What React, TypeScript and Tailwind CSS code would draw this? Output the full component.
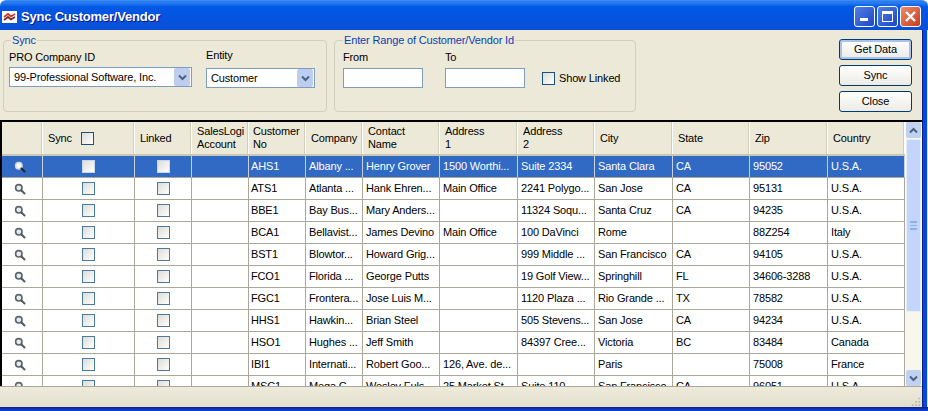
const columns = [
  { label: "Sync", width: "w-[92px]" },
  { label: "Linked", width: "w-[57px]" },
  { label: "SalesLogi Account", width: "w-[57px]" },
  { label: "Customer No", width: "w-[57px]" },
  { label: "Company", width: "w-[57px]" },
  { label: "Contact Name", width: "w-[77px]" },
  { label: "Address 1", width: "w-[78px]" },
  { label: "Address 2", width: "w-[77px]" },
  { label: "City", width: "w-[78px]" },
  { label: "State", width: "w-[77px]" },
  { label: "Zip", width: "w-[78px]" },
  { label: "Country", width: "w-[77px]" },
];

const rows = [
  ["AHS1", "Albany ...", "Henry Grover", "1500 Worthi...", "Suite 2334", "Santa Clara", "CA", "95052", "U.S.A."],
  ["ATS1", "Atlanta ...", "Hank Ehren...", "Main Office", "2241 Polygo...", "San Jose", "CA", "95131", "U.S.A."],
  ["BBE1", "Bay Bus...", "Mary Anders...", "", "11324 Soqu...", "Santa Cruz", "CA", "94235", "U.S.A."],
  ["BCA1", "Bellavist...", "James Devino", "Main Office", "100 DaVinci", "Rome", "", "88Z254", "Italy"],
  ["BST1", "Blowtor...", "Howard Grig...", "", "999 Middle ...", "San Francisco", "CA", "94105", "U.S.A."],
  ["FCO1", "Florida ...", "George Putts", "", "19 Golf View...", "Springhill", "FL", "34606-3288", "U.S.A."],
  ["FGC1", "Frontera...", "Jose Luis M...", "", "1120 Plaza ...", "Rio Grande ...", "TX", "78582", "U.S.A."],
  ["HHS1", "Hawkin...", "Brian Steel", "", "505 Stevens...", "San Jose", "CA", "94234", "U.S.A."],
  ["HSO1", "Hughes ...", "Jeff Smith", "", "84397 Cree...", "Victoria", "BC", "83484", "Canada"],
  ["IBI1", "Internati...", "Robert Goo...", "126, Ave. de...", "", "Paris", "", "75008", "France"],
  ["MSC1", "Mega C...", "Wesley Fuls...", "25 Market St", "Suite 110", "San Francisco", "CA", "96051", "U.S.A."],
];

const textWidths = columns.slice(3).map((c) => c.width);

const CheckBox = ({ selected, dark }: { selected?: boolean; dark?: boolean }) => (
  <span
    className={`block w-[13px] h-[13px] border bg-gradient-to-br from-[#dcdcd7] to-white ${
      selected ? "border-[#c9d6ea]" : dark ? "border-[#1c5180]" : "border-[#4a7a9c]"
    }`}
  />
);

const Magnifier = ({ selected }: { selected?: boolean }) => (
  <svg width="12" height="12" viewBox="0 0 12 12">
    <circle
      cx="4.8"
      cy="4.8"
      r="3.2"
      fill={selected ? "#ffffff" : "#e4ecf2"}
      stroke={selected ? "#d8d8d8" : "#5d6468"}
      strokeWidth="1.6"
    />
    <path d="M7.5 7.5 L10.5 10.5" stroke={selected ? "#20242c" : "#55585a"} strokeWidth="2" strokeLinecap="round" />
  </svg>
);

const Dropdown = ({ value, width }: { value: string; width: string }) => (
  <div className={`${width} h-[20px] flex items-center justify-between bg-white border border-[#7f9db9] pl-1 pr-px`}>
    <span>{value}</span>
    <span className="w-[16px] h-[18px] flex items-center justify-center rounded-[2px] bg-[#bccdef]">
      <svg width="9" height="7" viewBox="0 0 9 7">
        <path d="M1 1.5 L4.5 5 L8 1.5" fill="none" stroke="#4d6185" strokeWidth="2" />
      </svg>
    </span>
  </div>
);

const ActionButton = ({ label, isDefault }: { label: string; isDefault?: boolean }) => (
  <button
    className={`w-[73px] h-[21px] rounded-[3px] border border-[#003c74] bg-gradient-to-b from-white to-[#ecebe5] text-black ${
      isDefault ? "shadow-[inset_0_0_0_2px_#a9c3ea]" : ""
    }`}
  >
    {label}
  </button>
);

const App = () => {
  return (
    <div className="w-[928px] h-[411px] flex flex-col overflow-hidden bg-white text-[11px] leading-[13px] tracking-[-0.15px] text-black font-['Liberation_Sans',sans-serif]">
      <div className="h-[30px] shrink-0 flex items-center pt-[2px] pl-[2px] pr-[7px] rounded-t-[6px] bg-gradient-to-b from-[#2a7cf0] from-[6%] via-[#0058e6] via-[20%] to-[#0a4fd6] border-t border-[#3a8cf5]">
        <svg width="15" height="12" viewBox="0 0 15 12" className="shrink-0">
          <rect width="15" height="12" fill="#fff" />
          <path d="M2 6 L6 3 L9 5.5 L13 3" fill="none" stroke="#d23a30" strokeWidth="1.8" />
          <path d="M2 9 L6 6 L9 8.5 L13 6" fill="none" stroke="#7d2a30" strokeWidth="1.8" />
        </svg>
        <span className="ml-[4px] text-[13px] font-bold tracking-[-0.2px] text-white [text-shadow:1px_1px_#0f1089]">
          Sync Customer/Vendor
        </span>
        <div className="ml-auto flex gap-[2px]">
          <div className="w-[21px] h-[21px] rounded-[3px] border border-white bg-gradient-to-br from-[#4f7fe8] to-[#1f45c4] flex items-end pl-[5px] pb-[5px]">
            <span className="block w-[8px] h-[3px] bg-white" />
          </div>
          <div className="w-[21px] h-[21px] rounded-[3px] border border-white bg-gradient-to-br from-[#4f7fe8] to-[#1f45c4] flex items-center justify-center">
            <span className="block w-[11px] h-[11px] border border-white border-t-[3px]" />
          </div>
          <div className="w-[21px] h-[21px] rounded-[3px] border border-white bg-gradient-to-br from-[#ec8a6a] to-[#c8391a] flex items-center justify-center">
            <svg width="13" height="13" viewBox="0 0 13 13">
              <path d="M2 2 L11 11 M11 2 L2 11" stroke="#fff" strokeWidth="2.4" />
            </svg>
          </div>
        </div>
      </div>

      <div className="flex-1 min-h-0 flex flex-col pr-[6px] bg-[#ece9d8] shadow-[inset_-1px_0_#dfe6f7,inset_-5px_0_#0b45e0,inset_-6px_0_#0a1f8a]">
        <div className="h-[90px] shrink-0 flex pl-[3px] pr-[10px] pt-[4px]">
          <fieldset className="w-[324px] h-[78px] border border-[#d0d0bf] rounded-[4px] px-[5px] pt-[2px]">
            <legend className="ml-[2px] px-[1px] text-[#0b3fb0]">Sync</legend>
            <div className="flex gap-[14px]">
              <div className="flex flex-col gap-[3px]">
                <span className="pt-[2px]">PRO Company ID</span>
                <Dropdown value="99-Professional Software, Inc." width="w-[183px]" />
              </div>
              <div className="flex flex-col gap-[6px]">
                <span>Entity</span>
                <Dropdown value="Customer" width="w-[109px]" />
              </div>
            </div>
          </fieldset>
          <fieldset className="ml-[7px] w-[302px] h-[78px] border border-[#d0d0bf] rounded-[4px] pl-[8px] pt-[3px]">
            <legend className="px-[1px] text-[#0b3fb0]">Enter Range of Customer/Vendor Id</legend>
            <div className="flex items-end">
              <div className="flex flex-col gap-[4px]">
                <span className="pt-[1px]">From</span>
                <div className="w-[80px] h-[20px] bg-white border border-[#7f9db9]" />
              </div>
              <div className="ml-[22px] flex flex-col gap-[4px]">
                <span className="pt-[1px]">To</span>
                <div className="w-[80px] h-[20px] bg-white border border-[#7f9db9]" />
              </div>
              <div className="ml-[17px] mb-[3px] flex items-center gap-[4px]">
                <CheckBox dark />
                <span>Show Linked</span>
              </div>
            </div>
          </fieldset>
          <div className="ml-auto mt-[5px] flex flex-col gap-[5px]">
            <ActionButton label="Get Data" isDefault />
            <ActionButton label="Sync" />
            <ActionButton label="Close" />
          </div>
        </div>

        <div className="h-[266px] shrink-0 flex border-t-2 border-l-2 border-black bg-white overflow-hidden">
          <div className="w-[903px] shrink-0 overflow-hidden">
            <div className="h-[34px] flex bg-[#ece9d8] border-b-2 border-[#c9c7b6]">
              <div className="w-[41px] shrink-0 border-r border-white shadow-[inset_-1px_0_#d0cebd]" />
              {columns.map((col, i) => (
                <div
                  key={col.label}
                  className={`${col.width} shrink-0 border-r border-white shadow-[inset_-1px_0_#d0cebd] flex items-center gap-[9px] ${
                    i === 3 ? "pl-[4px]" : "pl-[5px]"
                  }`}
                >
                  <span className={col.label.startsWith("Address") || col.label === "Contact Name" ? "w-[40px]" : ""}>
                    {col.label}
                  </span>
                  {i === 0 && <CheckBox dark />}
                </div>
              ))}
            </div>
            {rows.map((row, r) => {
              const selected = r === 0;
              const line = selected ? "border-[#c8d0dc]" : "border-[#aca899]";
              return (
                <div
                  key={row[0]}
                  className={`h-[22px] flex border-b border-[#aca899] ${selected ? "bg-[#316ac5] text-white" : "bg-white"}`}
                >
                  <div className={`w-[41px] shrink-0 border-r ${line} flex items-center justify-center pr-[5px]`}>
                    <Magnifier selected={selected} />
                  </div>
                  <div className={`w-[92px] shrink-0 border-r ${line} flex items-center justify-center`}>
                    <CheckBox selected={selected} />
                  </div>
                  <div className={`w-[57px] shrink-0 border-r ${line} flex items-center justify-center`}>
                    <CheckBox selected={selected} />
                  </div>
                  <div className={`w-[57px] shrink-0 border-r ${line}`} />
                  {row.map((cell, c) => (
                    <div
                      key={c}
                      className={`${textWidths[c]} shrink-0 border-r ${line} ${
                        c === 0 ? "pl-[2px]" : "pl-[3px]"
                      } flex items-center whitespace-nowrap overflow-hidden`}
                    >
                      {cell}
                    </div>
                  ))}
                </div>
              );
            })}
          </div>
          <div className="w-[17px] shrink-0 flex flex-col border-x border-[#fbfbf6] bg-[#f7f7ee]">
            <div className="h-[16px] shrink-0 flex items-center justify-center rounded-[2px] bg-[#c1d2f0]">
              <svg width="9" height="7" viewBox="0 0 9 7">
                <path d="M1 5.5 L4.5 2 L8 5.5" fill="none" stroke="#4d6185" strokeWidth="2" />
              </svg>
            </div>
            <div className="mt-[1px] h-[173px] shrink-0 flex items-center justify-center bg-[#c3d5fb] rounded-[2px] border border-[#e6edfb]">
              <span className="block w-[7px] h-[9px] border-y-2 border-[#8fb0f0] bg-[linear-gradient(#c3d5fb_35%,#8fb0f0_35%,#8fb0f0_65%,#c3d5fb_65%)]" />
            </div>
            <div className="flex-1" />
            <div className="h-[16px] shrink-0 flex items-center justify-center rounded-[2px] bg-[#c1d2f0]">
              <svg width="9" height="7" viewBox="0 0 9 7">
                <path d="M1 1.5 L4.5 5 L8 1.5" fill="none" stroke="#4d6185" strokeWidth="2" />
              </svg>
            </div>
          </div>
        </div>

        <div className="flex-1 min-h-0 flex items-end justify-end bg-gradient-to-b from-[#eeebdc] to-[#e2dfcd] border-t border-[#aca899] pr-[1px] pb-[1px]">
          <svg width="10" height="10" viewBox="0 0 12 12">
            <path d="M9 2h2v2H9zM5 6h2v2H5zM9 6h2v2H9zM1 10h2v2H1zM5 10h2v2H5zM9 10h2v2H9z" fill="#b9b6a5" />
          </svg>
        </div>
        <div className="h-[4px] shrink-0 bg-gradient-to-b from-[#0a1f8a] to-[#0b45e0] -mr-[6px]" />
      </div>
    </div>
  );
};

export default App;
